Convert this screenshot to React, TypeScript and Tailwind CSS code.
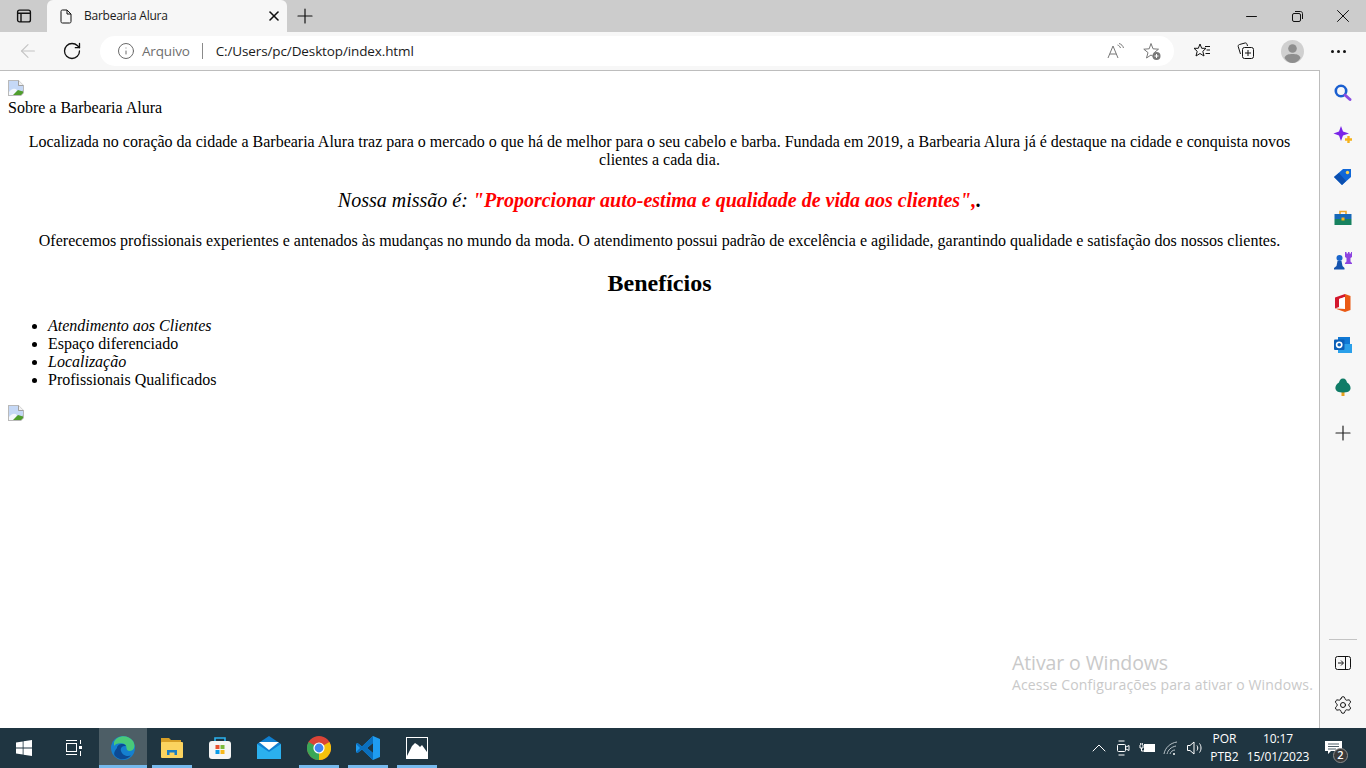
// App.tsx
import { Plus, X, RotateCw, ArrowLeft, Info, Minus, Settings, ChevronUp } from "lucide-react";

const uiFont = "font-['Open_Sans','Noto_Sans',sans-serif]";

function BrokenImage() {
    return (
        <svg width="16" height="16" viewBox="0 0 16 16" className="block">
            <path d="M0 0H10.500L16 5.500V16H0Z" fill="#b9b9b9" />
            <path d="M10.500 0.500V5.500H15.500" fill="#f2f2f2" stroke="#a0a0a0" />
            <path d="M1 1H10V6H15V10L10 15H1Z" fill="#c5d8f6" />
            <path d="M1 12C4 8 7 8 9 10L6 15H1Z" fill="#f4f8fd" />
            <path d="M5 15L10 10L15 11.500V13L13 15Z" fill="#4f9e2c" />
            <path d="M13 16L16 13V16Z" fill="#fff" />
        </svg>
    );
}

function SidebarIcons() {
    return (
        <div className="flex flex-col items-center">
            <div className="h-[42px] flex items-center justify-center">
                <svg width="20" height="20" viewBox="0 0 20 20">
                    <circle cx="8" cy="8" r="5.200" fill="none" stroke="#1a5fd0" strokeWidth="2.600" />
                    <path d="M12 12L17 16.500" stroke="#8a4be0" strokeWidth="3" strokeLinecap="round" />
                </svg>
            </div>
            <div className="h-[42px] flex items-center justify-center">
                <svg width="20" height="20" viewBox="0 0 20 20">
                    <path d="M8 1L10 6.500L16 8.500L10 10.500L8 16L6 10.500L0.500 8.500L6 6.500Z" fill="#7a25e8" />
                    <path d="M15.500 11V18M12 14.500H19" stroke="#f5b21b" strokeWidth="2.400" />
                </svg>
            </div>
            <div className="h-[42px] flex items-center justify-center">
                <svg width="20" height="20" viewBox="0 0 20 20">
                    <path d="M1 10L10 2H18V10L9 18Z" fill="#1068d8" />
                    <path d="M1 10L9 18L13 14L6 6Z" fill="#0b4fb0" />
                    <circle cx="14.500" cy="5.500" r="1.700" fill="#fcd34d" />
                </svg>
            </div>
            <div className="h-[42px] flex items-center justify-center">
                <svg width="20" height="20" viewBox="0 0 20 20">
                    <path d="M7 5V2.500H13V5" fill="none" stroke="#eba72c" strokeWidth="1.600" />
                    <rect x="1.500" y="5" width="17" height="5" fill="#1668b8" />
                    <rect x="1.500" y="10" width="17" height="6" fill="#17825f" />
                    <rect x="8.500" y="8.500" width="3" height="3" fill="#f5b21b" />
                </svg>
            </div>
            <div className="h-[42px] flex items-center justify-center">
                <svg width="20" height="20" viewBox="0 0 20 20">
                    <path d="M12 1H13.500V2.500H15V1H16.500V2.500H18V1H19V6L17.500 7V10.500L19 12V13H12V12L13.500 10.500V7L12 6Z" fill="#8e44e0" />
                    <circle cx="6.500" cy="7" r="3" fill="#1a66cc" />
                    <path d="M4.500 10H8.500L9.500 15L11.500 17V18.500H1V17L3.500 15Z" fill="#1553ad" />
                </svg>
            </div>
            <div className="h-[42px] flex items-center justify-center">
                <svg width="20" height="20" viewBox="0 0 20 20">
                    <path d="M2 4.500L12 1V4L6 6V14L2 15.500Z" fill="#d3172c" />
                    <path d="M6 6L12 4V16L6 14Z" fill="#fff" />
                    <path d="M12 1L17.500 3V17L12 19L2 15.500L12 16Z" fill="#ea5a15" />
                </svg>
            </div>
            <div className="h-[42px] flex items-center justify-center">
                <svg width="20" height="20" viewBox="0 0 20 20">
                    <rect x="5" y="2" width="12" height="7" fill="#0f78d4" />
                    <rect x="5" y="9" width="14" height="9" fill="#2aa0ea" />
                    <rect x="1" y="4.500" width="10.500" height="10.500" rx="1" fill="#0a5fb8" />
                    <circle cx="6.200" cy="9.800" r="2.600" fill="none" stroke="#fff" strokeWidth="1.600" />
                </svg>
            </div>
            <div className="h-[42px] flex items-center justify-center">
                <svg width="20" height="20" viewBox="0 0 20 20">
                    <rect x="8.500" y="14" width="3" height="5" fill="#e8a21e" />
                    <path d="M10 1.500C12.500 1.500 13.500 3.500 14 5.500C16 6.500 18 9 17.500 12C17 14.500 14.500 15.500 10 15.500C5.500 15.500 3 14.500 2.500 12C2 9 4 6.500 6 5.500C6.500 3.500 7.500 1.500 10 1.500Z" fill="#107c67" />
                </svg>
            </div>
            <div className="h-[50px] flex items-center justify-center">
                <Plus size={24} absoluteStrokeWidth strokeWidth={1.2} color="#222" />
            </div>
        </div>
    );
}

function TaskbarIcons() {
    return (
        <div className="flex items-stretch h-full">
            <div className="w-[48px] flex items-center justify-center">
                <svg width="16" height="16" viewBox="0 0 16 16">
                    <path d="M0 2.400L6.700 1.400V7.500H0ZM7.500 1.300L16 0V7.500H7.500ZM0 8.400H6.700V14.600L0 13.600ZM7.500 8.400H16V16L7.500 14.700Z" fill="#fff" />
                </svg>
            </div>
            <div className="w-[51px] flex items-center justify-center">
                <svg width="18" height="18" viewBox="0 0 18 18" fill="none" stroke="#fff" strokeWidth="1">
                    <rect x="1.500" y="4.500" width="10" height="8" />
                    <path d="M1 1.500H12M1 15.500H12M15.500 1V5M15.500 12V17" />
                    <rect x="14" y="7" width="3" height="3" fill="#fff" stroke="none" />
                </svg>
            </div>
            <div className="w-[48px] flex items-center justify-center bg-[#4d5e66] border-b-[3px] border-[#76b9ed] pt-[3px]">
                <svg width="24" height="24" viewBox="0 0 24 24">
                    <circle cx="12" cy="12" r="12" fill="#1580cf" />
                    <path d="M3 6C6 -1 17 -2 22 5C25 10 23 15 19 15C13 15 18 9 12 7.500C8 6.500 4 8 3 10Z" fill="#49c97a" />
                    <path d="M6 12C6 8 13 6.500 15 10C11 9.500 9 12 10 15C11 19 16 21 20 19.500C16 24 9 25 4 20C2 18 4 14 6 12Z" fill="#0c4a94" />
                </svg>
            </div>
            <div className="w-[40px] ml-[5px] flex items-center justify-center border-b-[3px] border-[#76b9ed] pt-[3px]">
                <svg width="24" height="22" viewBox="0 0 24 22">
                    <path d="M1 1H9L11 3H21V6H1Z" fill="#d79f26" />
                    <rect x="1" y="5" width="22" height="16" rx="1" fill="#fbd35f" />
                    <path d="M7 18V13H17V18H14.500V15.500H9.500V18Z" fill="#1a7dc4" />
                </svg>
            </div>
            <div className="w-[56px] flex items-center justify-center">
                <svg width="24" height="24" viewBox="0 0 24 24">
                    <path d="M7 6V2H17V6" fill="none" stroke="#2bb2ee" strokeWidth="1.600" />
                    <rect x="1" y="5" width="22" height="18" rx="3" fill="#f5f5f5" />
                    <rect x="7.500" y="9" width="4" height="4" fill="#e8502f" />
                    <rect x="12.500" y="9" width="4" height="4" fill="#7cba3c" />
                    <rect x="7.500" y="14" width="4" height="4" fill="#0a9be8" />
                    <rect x="12.500" y="14" width="4" height="4" fill="#f8b81a" />
                </svg>
            </div>
            <div className="w-[42px] flex items-center justify-center">
                <svg width="24" height="24" viewBox="0 0 24 24">
                    <path d="M0 8L12 0L24 8V23H0Z" fill="#0f7fd0" />
                    <path d="M0 8L12 16L24 8V23H0Z" fill="#2bb0ee" />
                    <path d="M2 6H22L12 14Z" fill="#fff" />
                </svg>
            </div>
            <div className="w-[40px] ml-[9px] flex items-center justify-center border-b-[3px] border-[#76b9ed] pt-[3px]">
                <svg width="24" height="24" viewBox="0 0 24 24">
                    <circle cx="12" cy="12" r="12" fill="#db4437" />
                    <path d="M12 12L22.400 6A12 12 0 0 1 12 24Z" fill="#f4c20d" />
                    <path d="M12 12L12 24A12 12 0 0 1 1.600 6Z" fill="#3aa757" />
                    <circle cx="12" cy="12" r="5.600" fill="#fff" />
                    <circle cx="12" cy="12" r="4.400" fill="#4285f4" />
                </svg>
            </div>
            <div className="w-[40px] ml-[9px] flex items-center justify-center border-b-[3px] border-[#76b9ed] pt-[3px]">
                <svg width="24" height="24" viewBox="0 0 24 24">
                    <path d="M17 0L24 3V21L17 24L6 13.500L1.500 17L0 16V8L1.500 7L6 10.500ZM17 7L11 12L17 17Z" fill="#1f9cf0" />
                    <path d="M17 0L6 10.500L1.500 7L0 8L4 12L0 16L1.500 17L6 13.500L17 24V17L11 12L17 7Z" fill="#0a6fbe" />
                </svg>
            </div>
            <div className="w-[40px] ml-[9px] flex items-center justify-center border-b-[3px] border-[#76b9ed] pt-[3px]">
                <svg width="22" height="22" viewBox="0 0 22 22">
                    <rect x="0.500" y="0.500" width="21" height="21" fill="#1f3541" stroke="#fff" />
                    <path d="M1 19L6 9L9 6L12 8L14 10L16 8L21 15V21H1Z" fill="#fff" />
                </svg>
            </div>
        </div>
    );
}

function Tray() {
    return (
        <div className={`flex items-center h-full text-white text-[12px] ${uiFont}`}>
            <ChevronUp size={24} absoluteStrokeWidth strokeWidth={1} color="#fff" className="mr-[4px]" />
            <svg width="16" height="18" viewBox="0 0 16 18" fill="none" stroke="#fff" strokeWidth="1" className="mr-[8px]">
                <rect x="2.500" y="5.500" width="8" height="7" rx="1" />
                <path d="M11 8L14 6.500V11.500L11 10M3.500 2H9.500M3.500 16H9.500" />
            </svg>
            <svg width="17" height="12" viewBox="0 0 17 12" className="mr-[7px]">
                <rect x="5" y="2" width="11" height="8" fill="#fff" />
                <path d="M1 3V6H4V3M2.500 6V9H5M1.700 1V3M3.300 1V3" fill="none" stroke="#fff" />
            </svg>
            <svg width="18" height="16" viewBox="0 0 18 16" fill="none" stroke="#b8c2c8" strokeWidth="1" className="mr-[5px]">
                <path d="M1 14C2 8 7 3 14 2M4 14C5 10 8 7 13 6M7 14C7.500 12 9.500 10 12 10" />
                <circle cx="11" cy="14" r="1" fill="#fff" stroke="none" />
            </svg>
            <svg width="18" height="16" viewBox="0 0 18 16" fill="none" stroke="#fff" strokeWidth="1" className="mr-[2px]">
                <path d="M1.500 5.500H4L8 2V14L4 10.500H1.500ZM11 5.500C12 7 12 9 11 10.500M13.500 3.500C15.500 6 15.500 10 13.500 12.500" />
            </svg>
            <div className="w-[37px] flex flex-col items-center leading-[18px]">
                <span>POR</span>
                <span>PTB2</span>
            </div>
            <div className="w-[70px] flex flex-col items-center leading-[18px] tracking-[-0.1px]">
                <span>10:17</span>
                <span>15/01/2023</span>
            </div>
            <div className="relative w-[53px] h-full flex items-start pl-[12px] pt-[13px]">
                <svg width="17" height="14" viewBox="0 0 17 14">
                    <path d="M0 0H17V10H6L3 13V10H0Z" fill="#fff" />
                    <path d="M3 3H14M3 5.500H14M3 8H11" stroke="#1f3541" strokeWidth="0.800" />
                </svg>
                <span className="absolute left-[20px] top-[20px] w-[15px] h-[15px] rounded-full bg-[#3a3a3a] border border-[#8d8d8d] flex items-center justify-center text-[11px] font-semibold">
                    2
                </span>
            </div>
        </div>
    );
}

export default function App() {
    return (
        <div className="h-screen w-full flex flex-col overflow-hidden bg-[#f7f7f7]">
            {/* tab strip */}
            <div className={`h-[32px] bg-[#cccccc] flex items-stretch shrink-0 ${uiFont}`}>
                <div className="w-[47px] flex items-center justify-center">
                    <svg width="16" height="16" viewBox="0 0 16 16" fill="none" stroke="#111" strokeWidth="1.400">
                        <rect x="1.600" y="2.100" width="12.800" height="11.800" rx="2" />
                        <path d="M1.600 5.200H14.400M5 5.200V13.900" />
                    </svg>
                </div>
                <div className="w-[240px] bg-[#f7f7f7] rounded-t-[6px] flex items-center pl-[13px] pr-[5px]">
                    <svg width="12" height="15" viewBox="0 0 12 15" fill="none" stroke="#111" strokeWidth="1">
                        <path d="M1 2.500C1 1.500 1.500 1 2.500 1H7L11 5V12.500C11 13.500 10.500 14 9.500 14H2.500C1.500 14 1 13.500 1 12.500ZM7 1V5H11" />
                    </svg>
                    <span className="ml-[12px] text-[12px] text-[#1a1a1a] flex-1 truncate tracking-[-0.25px]">Barbearia Alura</span>
                    <X size={16} absoluteStrokeWidth strokeWidth={1.6} color="#111" />
                </div>
                <div className="w-[36px] flex items-center justify-center">
                    <Plus size={24} absoluteStrokeWidth strokeWidth={1.2} color="#111" />
                </div>
                <div className="flex-1" />
                <div className="w-[46px] flex items-center justify-center">
                    <Minus size={17} absoluteStrokeWidth strokeWidth={1} color="#111" />
                </div>
                <div className="w-[46px] flex items-center justify-center">
                    <svg width="11" height="11" viewBox="0 0 11 11" fill="none" stroke="#111" strokeWidth="1">
                        <rect x="0.500" y="2.500" width="8" height="8" rx="1.500" />
                        <path d="M3 0.500H8.500C9.600 0.500 10.500 1.400 10.500 2.500V8" />
                    </svg>
                </div>
                <div className="w-[46px] flex items-center justify-center">
                    <X size={22} absoluteStrokeWidth strokeWidth={1} color="#111" />
                </div>
            </div>

            {/* toolbar */}
            <div className={`h-[38px] bg-[#f7f7f7] flex items-center shrink-0 ${uiFont}`}>
                <div className="w-[56px] flex items-center justify-center">
                    <ArrowLeft size={22} absoluteStrokeWidth strokeWidth={1.1} color="#c4c4c4" />
                </div>
                <div className="w-[32px] flex items-center justify-center">
                    <RotateCw size={20} absoluteStrokeWidth strokeWidth={1.3} color="#111" />
                </div>
                <div className="ml-[12px] w-[1074px] h-[30px] bg-white rounded-full flex items-center pl-[17px] pr-[12px]">
                    <Info size={18} absoluteStrokeWidth strokeWidth={1} color="#6b6b6b" />
                    <span className="ml-[7px] text-[13.5px] text-[#6e6e6e] tracking-[-0.17px]">Arquivo</span>
                    <span className="w-px h-[16px] bg-[#8a8a8a] ml-[12px]" />
                    <span className="ml-[13px] text-[13.5px] text-[#1a1a1a] tracking-[-0.12px]">C:/Users/pc/Desktop/index.html</span>
                    <div className="flex-1" />
                    <svg width="18" height="16" viewBox="0 0 18 16" fill="none" stroke="#777" strokeWidth="1" className="mr-[18px]">
                        <path d="M1 15L6 3L11 15M2.800 11H9.200M10.500 2C12 2.500 13 3.500 13.500 5M12 0.500C14.500 1.200 16 3 16.500 5" />
                    </svg>
                    <svg width="19" height="19" viewBox="0 0 19 19" fill="none" stroke="#777" strokeWidth="1">
                        <path d="M8 1.500L10 6.800L15.500 7.200L11.300 10.600L12.800 16L8 13L3.500 16L5 10.600L0.800 7.200L6.200 6.800Z" />
                        <circle cx="13.500" cy="14" r="4" fill="#777" stroke="none" />
                        <path d="M11.500 14H15.500M13.500 12V16" stroke="#fff" />
                    </svg>
                </div>
                <div className="w-[40px] ml-[8px] flex items-center justify-center">
                    <svg width="18" height="16" viewBox="0 0 18 16" fill="none" stroke="#111" strokeWidth="1">
                        <path d="M7 1L8.700 5.300H13L9.800 8.300L11 13L7 10.500L3 13L4.200 8.300L1 5.300H5.300Z" />
                        <path d="M12 3.500H17M13.500 7H17M12.500 10.500H17" />
                    </svg>
                </div>
                <div className="w-[48px] flex items-center justify-center">
                    <svg width="18" height="18" viewBox="0 0 18 18" fill="none" stroke="#111" strokeWidth="1">
                        <path d="M3.500 12L1.200 4.500C1 3.500 1.500 2.800 2.500 2.500L8 1C9 0.800 9.700 1.200 10 2.200L10.500 4" />
                        <rect x="5.500" y="5.500" width="11" height="11" rx="2" />
                        <path d="M11 8V14M8 11H14" />
                    </svg>
                </div>
                <div className="w-[44px] flex items-center justify-center">
                    <svg width="23" height="23" viewBox="0 0 23 23">
                        <circle cx="11.500" cy="11.500" r="11.500" fill="#d0d0d0" />
                        <circle cx="11.500" cy="8.500" r="4.300" fill="#8e8e8e" />
                        <path d="M3.500 18C4.500 14.500 7.500 14 11.500 14C15.500 14 18.500 14.500 19.500 18C17.500 21.500 14.500 23 11.500 23C8.500 23 5.500 21.500 3.500 18Z" fill="#8e8e8e" />
                    </svg>
                </div>
                <div className="flex-1 flex items-center justify-center gap-[3px] pr-[4px]">
                    <span className="w-[3px] h-[3px] rounded-full bg-[#111]" />
                    <span className="w-[3px] h-[3px] rounded-full bg-[#111]" />
                    <span className="w-[3px] h-[3px] rounded-full bg-[#111]" />
                </div>
            </div>

            {/* page + sidebar */}
            <div className="flex-1 min-h-0 flex relative">
                <div className="flex-1 bg-white border-t border-r border-[#bdbdbd] px-[8px] pt-[9px] font-['Liberation_Serif',serif] text-[16px] leading-[18px] text-black">
                    <BrokenImage />
                    <div className="mt-[3px]">Sobre a Barbearia Alura</div>
                    <p className="mt-[16px] text-center">
                        Localizada no coração da cidade a Barbearia Alura traz para o mercado o que há de melhor para o seu cabelo e barba. Fundada em 2019, a Barbearia Alura já é destaque na cidade e conquista novos clientes a cada dia.
                    </p>
                    <h3 className="mt-[21px] text-center text-[20px] leading-[21px] italic">
                        Nossa missão é: <strong className="text-[#ff0000] font-bold">"Proporcionar auto-estima e qualidade de vida aos clientes",</strong><strong className="font-bold">.</strong>
                    </h3>
                    <p className="mt-[21px] text-center">
                        Oferecemos profissionais experientes e antenados às mudanças no mundo da moda. O atendimento possui padrão de excelência e agilidade, garantindo qualidade e satisfação dos nossos clientes.
                    </p>
                    <h2 className="mt-[20px] text-center text-[24px] leading-[27px] font-bold">Benefícios</h2>
                    <ul className="mt-[20px] pl-[40px] list-disc">
                        <li className="italic">Atendimento aos Clientes</li>
                        <li>Espaço diferenciado</li>
                        <li className="italic">Localização</li>
                        <li>Profissionais Qualificados</li>
                    </ul>
                    <div className="mt-[16px]">
                        <BrokenImage />
                    </div>
                </div>

                <div className="w-[46px] shrink-0 bg-[#f7f7f7] flex flex-col items-center pt-[2px] pb-[2px]">
                    <SidebarIcons />
                    <div className="flex-1" />
                    <div className="w-[28px] h-px bg-[#c4c4c4] mb-[2px]" />
                    <div className="h-[42px] flex items-center justify-center">
                        <svg width="16" height="14" viewBox="0 0 16 14" fill="none" stroke="#111" strokeWidth="1">
                            <rect x="0.500" y="0.500" width="15" height="13" rx="2" />
                            <path d="M10.500 0.500V13.500M3 7H8M6 4.500L8.500 7L6 9.500" />
                        </svg>
                    </div>
                    <div className="h-[42px] flex items-center justify-center">
                        <Settings size={20} absoluteStrokeWidth strokeWidth={1} color="#111" />
                    </div>
                </div>

                {/* marca d'agua do Windows */}
                <div className={`absolute left-[1012px] top-[581px] text-[#c9c9c9] whitespace-nowrap ${uiFont}`}>
                    <div className="text-[19.5px] leading-[24px] tracking-[-0.1px]">Ativar o Windows</div>
                    <div className="text-[14px] leading-[20px] tracking-[0.15px]">Acesse Configurações para ativar o Windows.</div>
                </div>
            </div>

            {/* taskbar */}
            <div className="h-[40px] shrink-0 bg-[#1f3541] flex items-center justify-between">
                <TaskbarIcons />
                <Tray />
            </div>
        </div>
    );
}
